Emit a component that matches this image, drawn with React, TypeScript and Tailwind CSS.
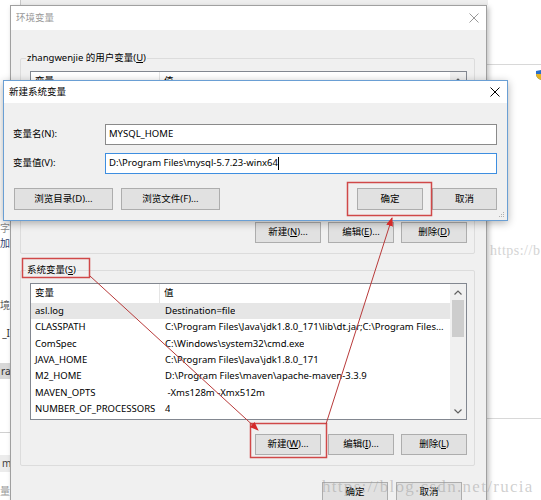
import type { ReactNode } from 'react'

const sysRows: [string, string][] = [
  ['asl.log', 'Destination=file'],
  ['CLASSPATH', 'C:\\Program Files\\Java\\jdk1.8.0_171\\lib\\dt.jar;C:\\Program Files...'],
  ['ComSpec', 'C:\\Windows\\system32\\cmd.exe'],
  ['JAVA_HOME', 'C:\\Program Files\\Java\\jdk1.8.0_171'],
  ['M2_HOME', 'D:\\Program Files\\maven\\apache-maven-3.3.9'],
  ['MAVEN_OPTS', ' -Xms128m -Xmx512m'],
  ['NUMBER_OF_PROCESSORS', '4'],
]

function CloseX({ className }: { className?: string }) {
  return (
    <svg width="10" height="10" viewBox="0 0 10 10" className={className}>
      <path d="M0.5 0.5L9.5 9.5M9.5 0.5L0.5 9.5" stroke="currentColor" strokeWidth="1" />
    </svg>
  )
}

function Btn({ children, className = '' }: { children: ReactNode; className?: string }) {
  return (
    <div
      className={`flex h-[21px] shrink-0 items-center justify-center border border-[#adadad] bg-[#e1e1e1] text-black ${className}`}
    >
      {children}
    </div>
  )
}

function Chevron({ up }: { up?: boolean }) {
  return (
    <svg width="8" height="5" viewBox="0 0 8 5">
      <path
        d={up ? 'M0.5 4.5L4 1L7.5 4.5' : 'M0.5 0.5L4 4L7.5 0.5'}
        fill="none"
        stroke="#606060"
        strokeWidth="1.2"
      />
    </svg>
  )
}

function VarTable({ rows, selected }: { rows: [string, string][]; selected?: number }) {
  return (
    <div className="flex h-[137px] w-[437px] border border-[#828790] bg-white">
      <div className="flex min-w-0 flex-1 flex-col">
        <div className="flex h-[19px] shrink-0">
          <div className="flex w-[129px] items-center border-r border-[#e5e5e5] pl-[4px]">变量</div>
          <div className="flex items-center pl-[4px]">值</div>
        </div>
        {rows.map(([k, v], i) => (
          <div
            key={k}
            className={`flex h-[16.33px] shrink-0 items-center ${i === selected ? 'bg-[#e6e6e6]' : ''}`}
          >
            <div className="w-[130px] shrink-0 overflow-hidden whitespace-nowrap pl-[4px]">{k}</div>
            <div className="min-w-0 overflow-hidden whitespace-pre pl-[4px]">{v}</div>
          </div>
        ))}
      </div>
      <div className="flex w-[16px] shrink-0 flex-col items-center bg-[#f0f0f0]">
        <div className="flex h-[16px] items-center justify-center">
          <Chevron up />
        </div>
        <div className="h-[37px] w-[12px] bg-[#cdcdcd]" />
        <div className="flex-1" />
        <div className="flex h-[16px] items-center justify-center">
          <Chevron />
        </div>
      </div>
    </div>
  )
}

function Group({
  label,
  rows,
  selected,
  buttons,
  className = '',
}: {
  label: ReactNode
  rows: [string, string][]
  selected?: number
  buttons: ReactNode[]
  className?: string
}) {
  return (
    <fieldset className={`w-[455px] rounded-[2px] border border-[#dcdcdc] pb-[10px] pl-[9px] pr-[7px] ${className}`}>
      <legend className="-ml-[4px] px-[1px] leading-[16px]">{label}</legend>
      <div className="mt-[5px]">
        <VarTable rows={rows} selected={selected} />
      </div>
      <div className="mt-[14px] flex justify-end gap-[7px]">
        {buttons.map((b, i) => (
          <Btn key={i} className="w-[66px]">
            {b}
          </Btn>
        ))}
      </div>
    </fieldset>
  )
}

function Annotations() {
  return (
    <svg width="541" height="500" className="pointer-events-none absolute left-0 top-0">
      <defs>
        <marker
          id="ah"
          markerWidth="9"
          markerHeight="7"
          refX="8"
          refY="3.5"
          orient="auto"
          markerUnits="userSpaceOnUse"
        >
          <path d="M0,0 L9,3.5 L0,7 z" fill="#d42a2a" />
        </marker>
      </defs>
      <rect x="347.5" y="182.5" width="84" height="33" fill="none" stroke="#d04848" strokeWidth="1.5" />
      <rect x="22.5" y="258.5" width="67" height="19" fill="none" stroke="#d04848" strokeWidth="1.5" />
      <rect x="250.5" y="423.5" width="76" height="34" fill="none" stroke="#d04848" strokeWidth="1.5" />
      <line x1="90" y1="276" x2="258" y2="430" stroke="#b83a3a" strokeWidth="1" markerEnd="url(#ah)" />
      <line x1="326" y1="424" x2="392" y2="218" stroke="#b83a3a" strokeWidth="1" markerEnd="url(#ah)" />
    </svg>
  )
}

function App() {
  return (
    <div className="relative h-[500px] w-[541px] overflow-hidden bg-white font-['Noto_Sans','Noto_Sans_CJK_SC',sans-serif] text-[9.5px] text-black">
      {/* window behind, left edge */}
      <div className="absolute left-0 top-0 flex h-full w-[10px] flex-col overflow-hidden text-[10px] leading-[15px]">
        <div className="h-[221px] shrink-0" />
        <div className="h-[15px] shrink-0 whitespace-nowrap text-right text-[#8a8a8a]">字</div>
        <div className="h-[15px] shrink-0 whitespace-nowrap text-right text-[#304070]">加</div>
        <div className="h-[47px] shrink-0" />
        <div className="h-[15px] shrink-0 whitespace-nowrap text-right text-[#606060]">境</div>
        <div className="h-[13px] shrink-0" />
        <div className="h-[15px] shrink-0 whitespace-nowrap text-right text-[#303030]">_I</div>
        <div className="h-[22px] shrink-0" />
        <div className="flex h-[16px] shrink-0 items-center bg-[#d8d8d8] pl-[1px] text-[#303030]">ra</div>
        <div className="h-[54px] shrink-0 border-b border-[#d0d0d0]" />
        <div className="h-[22px] shrink-0" />
        <div className="flex h-[17px] shrink-0 items-center bg-[#ececec] pl-[2px] text-[#404040]">m</div>
        <div className="h-[12px] shrink-0" />
        <div className="h-[15px] shrink-0 whitespace-nowrap text-[#9a9a9a]">量</div>
      </div>

      {/* desktop behind, right side */}
      <div className="absolute left-[487px] top-0 flex h-full w-[54px] flex-col">
        <div className="h-[65px] shrink-0 border-b border-[#d8d8d8]" />
        <div className="flex h-[20px] shrink-0 items-center justify-end">
          <svg width="5" height="10" viewBox="0 0 5 10">
            <path d="M0 1L5 0V10C2 9 0 7 0 4Z" fill="#2a6fc9" />
            <path d="M0 4H5V10C2 9 0 7 0 4Z" fill="#e6b422" />
          </svg>
        </div>
        <div className="h-[155px] shrink-0" />
        <div className="whitespace-nowrap pl-[3px] font-['Liberation_Serif',serif] text-[14px] tracking-[0.5px] text-[#d4d4d4]">
          https://b
        </div>
        <div className="h-[158px] shrink-0 border-b border-[#d8d8d8]" />
      </div>

      <div className="absolute left-[20px] top-0 h-[5px] w-[468px] border-l border-[#c8c8c8] bg-[#eeeeee]" />

      {/* 环境变量 */}
      <div className="absolute left-[10px] top-[5px] flex h-[515px] w-[477px] flex-col border border-[#a0a0a0] bg-[#f0f0f0] shadow-[2px_2px_5px_rgba(0,0,0,0.25)]">
        <div className="flex h-[24px] shrink-0 items-center justify-between bg-white pl-[5px] pr-[7px] text-[#999999]">
          <span>环境变量</span>
          <CloseX />
        </div>
        <div className="flex flex-col pl-[9px] pr-[11px]">
          <Group
            className="mt-[20px]"
            label={
              <>
                zhangwenjie 的用户变量(<u>U</u>)
              </>
            }
            rows={[]}
            buttons={[
              <>
                新建(<u>N</u>)...
              </>,
              <>
                编辑(<u>E</u>)...
              </>,
              <>
                删除(<u>D</u>)
              </>,
            ]}
          />
          <Group
            className="mt-[8px]"
            label={
              <>
                系统变量(<u>S</u>)
              </>
            }
            rows={sysRows}
            selected={0}
            buttons={[
              <>
                新建(<u>W</u>)...
              </>,
              <>
                编辑(<u>I</u>)...
              </>,
              <>
                删除(<u>L</u>)
              </>,
            ]}
          />
          <div className="mt-[16px] flex justify-end gap-[8px] pr-[13px]">
            <Btn className="w-[66px]">确定</Btn>
            <Btn className="w-[66px]">取消</Btn>
          </div>
        </div>
      </div>

      {/* 新建系统变量 */}
      <div className="absolute left-[3px] top-[80px] flex h-[141px] w-[505px] flex-col border border-[#6a9fd4] bg-[#f0f0f0] shadow-[0_2px_8px_rgba(0,0,0,0.3)]">
        <div className="flex h-[22px] shrink-0 items-center justify-between bg-white pl-[5px] pr-[7px]">
          <span>新建系统变量</span>
          <CloseX />
        </div>
        <div className="flex flex-col pl-[9px] pr-[10px] pt-[21px]">
          <div className="flex h-[21px] items-center">
            <div className="w-[92px] shrink-0">变量名(N):</div>
            <div className="flex h-full flex-1 items-center border border-[#8a8a8a] bg-white pl-[3px]">
              MYSQL_HOME
            </div>
          </div>
          <div className="mt-[8px] flex h-[21px] items-center">
            <div className="w-[92px] shrink-0">变量值(V):</div>
            <div className="flex h-full flex-1 items-center border border-[#3d8ee0] bg-white pl-[3px]">
              <span>D:\Program Files\mysql-5.7.23-winx64</span>
              <span className="h-[13px] w-[1px] bg-black" />
            </div>
          </div>
          <div className="mt-[14px] flex h-[22px]">
            <Btn className="ml-[1px] h-[22px] w-[99px]">浏览目录(D)...</Btn>
            <Btn className="ml-[8px] h-[22px] w-[99px]">浏览文件(F)...</Btn>
            <Btn className="ml-auto h-[22px] w-[66px]">确定</Btn>
            <Btn className="ml-[9px] h-[22px] w-[65px]">取消</Btn>
          </div>
        </div>
        <svg width="6" height="6" viewBox="0 0 6 6" className="absolute bottom-[2px] right-[2px]">
          <rect x="4" y="0" width="1" height="1" fill="#b0b0b0" />
          <rect x="2" y="2" width="1" height="1" fill="#b0b0b0" />
          <rect x="4" y="2" width="1" height="1" fill="#b0b0b0" />
          <rect x="0" y="4" width="1" height="1" fill="#b0b0b0" />
          <rect x="2" y="4" width="1" height="1" fill="#b0b0b0" />
          <rect x="4" y="4" width="1" height="1" fill="#b0b0b0" />
        </svg>
      </div>

      <Annotations />

      {/* watermark */}
      <div className="pointer-events-none absolute left-[322px] top-[474px] whitespace-nowrap font-['Liberation_Serif',serif] text-[17px] tracking-[1.3px] text-[rgba(150,150,150,0.45)]">
        https://blog.csdn.net/rucia
      </div>
    </div>
  )
}

export default App
